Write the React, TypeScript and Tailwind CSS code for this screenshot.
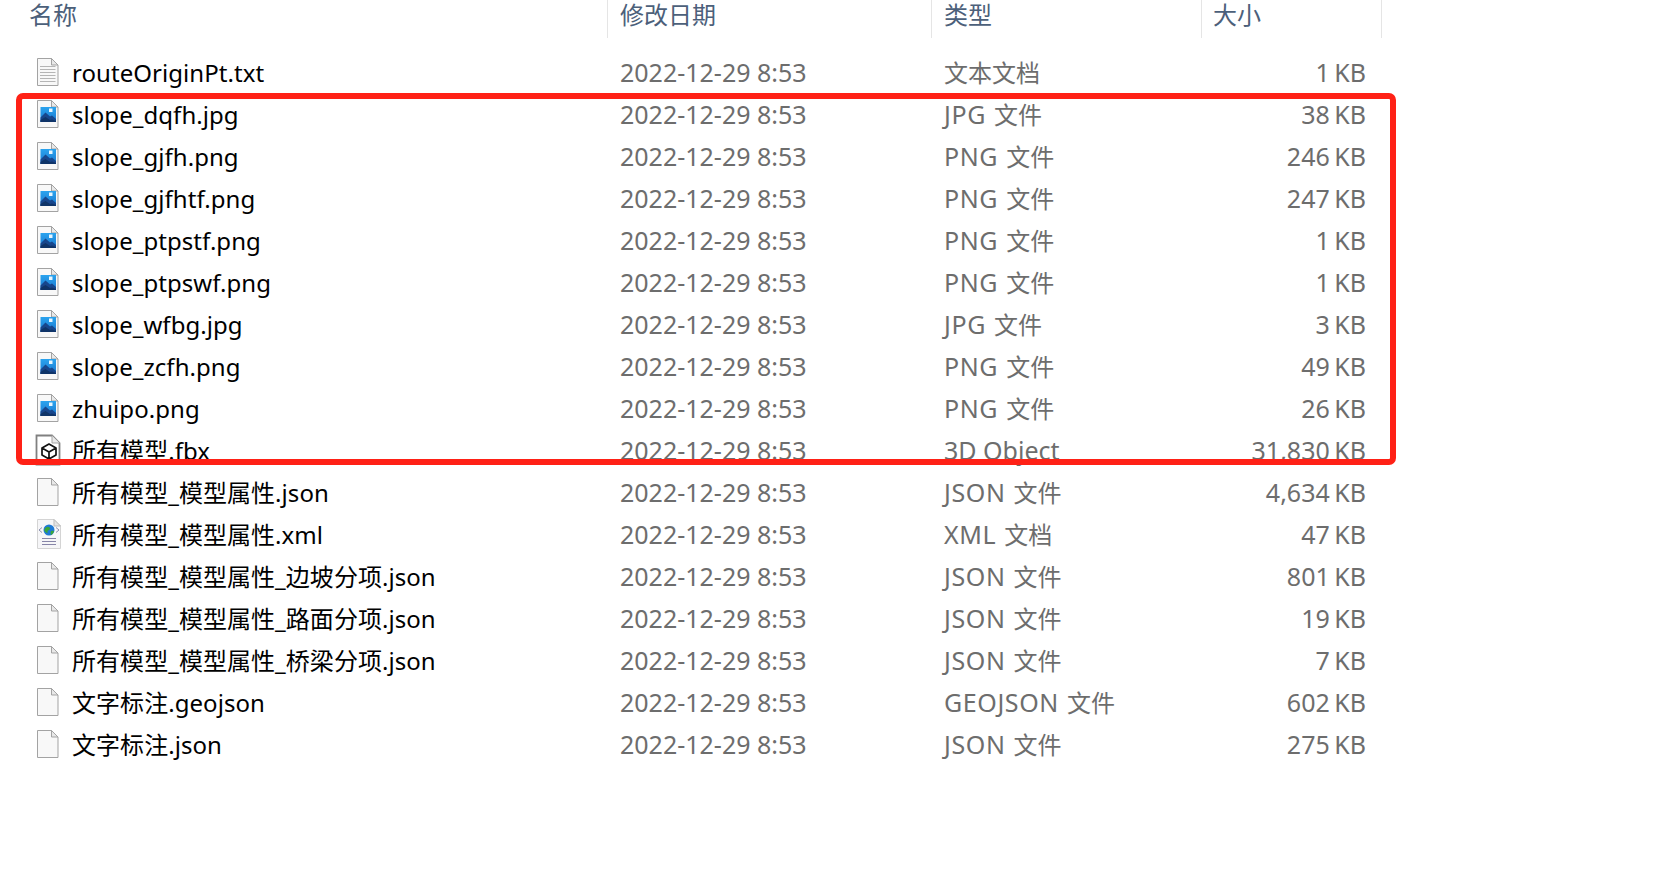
const FONT = '"Noto Sans", "Noto Sans CJK SC", sans-serif';

type Kind = 'txt' | 'image' | 'fbx' | 'blank' | 'xml';

const files: { name: string; date: string; type: string; size: string; kind: Kind }[] = [
  { name: 'routeOriginPt.txt', date: '2022-12-29 8:53', type: '文本文档', size: '1 KB', kind: 'txt' },
  { name: 'slope_dqfh.jpg', date: '2022-12-29 8:53', type: 'JPG 文件', size: '38 KB', kind: 'image' },
  { name: 'slope_gjfh.png', date: '2022-12-29 8:53', type: 'PNG 文件', size: '246 KB', kind: 'image' },
  { name: 'slope_gjfhtf.png', date: '2022-12-29 8:53', type: 'PNG 文件', size: '247 KB', kind: 'image' },
  { name: 'slope_ptpstf.png', date: '2022-12-29 8:53', type: 'PNG 文件', size: '1 KB', kind: 'image' },
  { name: 'slope_ptpswf.png', date: '2022-12-29 8:53', type: 'PNG 文件', size: '1 KB', kind: 'image' },
  { name: 'slope_wfbg.jpg', date: '2022-12-29 8:53', type: 'JPG 文件', size: '3 KB', kind: 'image' },
  { name: 'slope_zcfh.png', date: '2022-12-29 8:53', type: 'PNG 文件', size: '49 KB', kind: 'image' },
  { name: 'zhuipo.png', date: '2022-12-29 8:53', type: 'PNG 文件', size: '26 KB', kind: 'image' },
  { name: '所有模型.fbx', date: '2022-12-29 8:53', type: '3D Object', size: '31,830 KB', kind: 'fbx' },
  { name: '所有模型_模型属性.json', date: '2022-12-29 8:53', type: 'JSON 文件', size: '4,634 KB', kind: 'blank' },
  { name: '所有模型_模型属性.xml', date: '2022-12-29 8:53', type: 'XML 文档', size: '47 KB', kind: 'xml' },
  { name: '所有模型_模型属性_边坡分项.json', date: '2022-12-29 8:53', type: 'JSON 文件', size: '801 KB', kind: 'blank' },
  { name: '所有模型_模型属性_路面分项.json', date: '2022-12-29 8:53', type: 'JSON 文件', size: '19 KB', kind: 'blank' },
  { name: '所有模型_模型属性_桥梁分项.json', date: '2022-12-29 8:53', type: 'JSON 文件', size: '7 KB', kind: 'blank' },
  { name: '文字标注.geojson', date: '2022-12-29 8:53', type: 'GEOJSON 文件', size: '602 KB', kind: 'blank' },
  { name: '文字标注.json', date: '2022-12-29 8:53', type: 'JSON 文件', size: '275 KB', kind: 'blank' },
];

function FileIcon({ kind }: { kind: Kind }) {
  if (kind === 'fbx') {
    return (
      <svg width="26" height="32" viewBox="0 0 26 32" className="-ml-[2px] block">
        <path d="M1.5 1.5H17L24.5 9V30.5H1.5Z" fill="#fff" stroke="#808080" strokeWidth="1.8" />
        <path d="M17 1.5V9H24.5" fill="#e8e8e8" stroke="#a3a3a3" strokeWidth="1" />
        <path d="M14 10L21 14V21L14 25L7 21V14ZM7 14L14 18L21 14M14 18V25" fill="none" stroke="#111" strokeWidth="1.7" strokeLinejoin="round" />
      </svg>
    );
  }
  if (kind === 'xml') {
    return (
      <svg width="26" height="32" viewBox="0 0 26 32" className="block">
        <path d="M0.5 1.5H17L23.5 8V30.5H0.5Z" fill="#f6f6f8" stroke="#d4d4d4" strokeWidth="1" />
        <path d="M17 1.5V8H23.5Z" fill="#e4e4e4" stroke="#bdbdbd" strokeWidth="1" />
        <circle cx="12" cy="12" r="5.5" fill="#1f7ad6" />
        <path d="M9 9.5C11 8 13 9 13 10.5C13 12.5 10 12 10.5 14C11 16 8.5 14.5 7.5 13C7 11.5 8 10 9 9.5Z" fill="#3aa63a" />
        <path d="M14 13C15.5 12.5 17 12.5 17 13.5C16.5 15 15 16.5 14 17C13.5 15.5 13.5 14 14 13Z" fill="#3aa63a" />
        <path d="M5 9.5L2 12L5 14.5M19 9.5L22 12L19 14.5" fill="none" stroke="#8a8fb0" strokeWidth="1" />
        <path d="M5 20.5H19M5 23.5H19M5 26.5H19" stroke="#8785a8" strokeWidth="1" />
      </svg>
    );
  }
  return (
    <svg width="23" height="30" viewBox="0 0 23 30" className="block">
      <path d="M0.5 1.5H14.5L21 8V28.5H0.5Z" fill="#f8f8f8" stroke="#a3a3a3" strokeWidth="1" />
      <path d="M14.5 1.5V8H21Z" fill="#e8e8e8" stroke="#a3a3a3" strokeWidth="1" strokeLinejoin="round" />
      {kind === 'txt' && (
        <path d="M3 9.5H18.5M3 12.5H18.5M3 15.5H18.5M3 18.5H18.5M3 21.5H18.5M3 24.5H18.5" stroke="#b5b5b5" strokeWidth="1" />
      )}
      {kind === 'image' && (
        <>
          <defs>
            <linearGradient id="sky" x1="0" y1="0" x2="0" y2="1">
              <stop offset="0" stopColor="#2aa3ee" />
              <stop offset="1" stopColor="#1a78d0" />
            </linearGradient>
          </defs>
          <rect x="3.5" y="8" width="15.5" height="15" fill="url(#sky)" />
          <rect x="12" y="9.5" width="3.5" height="3.5" fill="#e8f6ff" />
          <path d="M3.5 23V18.5L8.5 13.5L13 17.5L15 16.5L19 20V23Z" fill="#17468c" />
          <path d="M3.5 23V21L8.5 18L13 21L15 20.5L19 22V23Z" fill="#0f3468" />
        </>
      )}
    </svg>
  );
}

function TypeCell({ type }: { type: string }) {
  const m = type.match(/^(\w+) ([\u4e00-\u9fff]+)$/);
  if (!m) {
    const isCjk = /^[\u4e00-\u9fff]+$/.test(type);
    return <span className={isCjk ? 'text-[24px]' : ''}>{type}</span>;
  }
  return (
    <>
      <span className="mr-[8px] tracking-[0.6px]">{m[1]}</span>
      <span className="text-[24px]">{m[2]}</span>
    </>
  );
}

function HeaderCell({ label, className }: { label: string; className: string }) {
  return (
    <div className={`h-[38px] shrink-0 border-r border-[#e5e5e5] pt-[1px] text-[24px] leading-[28px] text-[#4c607a] ${className}`}>
      {label}
    </div>
  );
}

export default function App() {
  return (
    <div className="relative h-[870px] w-[1660px] overflow-hidden bg-white" style={{ fontFamily: FONT }}>
      <div className="flex h-[51px] items-start">
        <HeaderCell label="名称" className="w-[608px] pl-[29px]" />
        <HeaderCell label="修改日期" className="w-[324px] pl-[12px]" />
        <HeaderCell label="类型" className="w-[270px] pl-[12px]" />
        <HeaderCell label="大小" className="w-[180px] pl-[11px]" />
      </div>

      <div className="flex flex-col">
        {files.map((f) => (
          <div key={f.name} className="flex h-[42px] items-center text-[25px] leading-[42px] whitespace-nowrap">
            <div className="flex w-[620px] shrink-0 items-center">
              <div className="flex w-[72px] shrink-0 pl-[37px]">
                <FileIcon kind={f.kind} />
              </div>
              <span className="pt-[1px] text-[24px] tracking-[0.05px] text-black">{f.name}</span>
            </div>
            <div className="w-[324px] shrink-0 text-[#6d6d6d]">{f.date}</div>
            <div className="w-[200px] shrink-0 text-[#6d6d6d]">
              <TypeCell type={f.type} />
            </div>
            <div className="w-[222px] shrink-0 text-right text-[#6d6d6d] [word-spacing:-2px]">{f.size}</div>
          </div>
        ))}
      </div>

      {/* 红框标注 */}
      <div className="absolute left-[16px] top-[93px] h-[372px] w-[1380px] rounded-[7px] border-[6px] border-[#ff2116]" />
    </div>
  );
}
